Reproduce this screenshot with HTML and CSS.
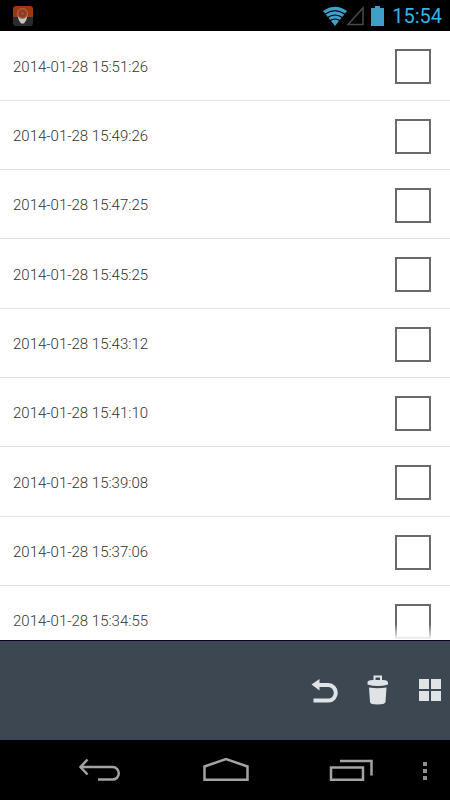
FILE: index.html
```
<!DOCTYPE html>
<html lang="en">
<head>
    <meta charset="UTF-8">
    <meta name="viewport" content="width=device-width, initial-scale=1.0">
    <title>Records</title>
    <link rel="stylesheet" href="styles.css">
</head>
<body>
    <header class="status-bar">
        <svg class="app-icon" width="20" height="20" viewBox="0 0 20 20">
            <defs>
                <clipPath id="appShape"><rect width="20" height="20" rx="3"/></clipPath>
            </defs>
            <g clip-path="url(#appShape)">
                <rect width="20" height="12" fill="#a03610"/>
                <rect y="11" width="20" height="9" fill="#2b2c2d"/>
            </g>
            <path d="M4.500 9.500q.5 4 3.500 8h3q3-4 3.500-8z" fill="#c9c5c2"/>
            <circle cx="9.500" cy="7.500" r="5" fill="#93452f" stroke="#b0654f"/>
            <circle cx="9.500" cy="7.500" r="2.500" fill="#a8452a" stroke="#7a3420"/>
        </svg>
        <div class="status-info">
            <svg width="62" height="20" viewBox="0 0 62 20">
                <!-- wifi -->
                <path d="M1 5Q13-3.500 25 5L13 20z" fill="#3f9fca"/>
                <g fill="none" stroke="#000" stroke-width="1.200">
                    <path d="M2.500 8.500Q13 1 23.500 8.500"/>
                    <path d="M5 12Q13 6 21 12"/>
                    <path d="M7.500 15Q13 11 18.500 15"/>
                </g>
                <!-- signal -->
                <path d="M41 2v16.500H26z" fill="none" stroke="#4a4a4a" stroke-width="1.500"/>
                <!-- battery -->
                <path d="M49 2h4V0h5v2h4v18H49z" fill="#3f9fca"/>
            </svg>
            <span class="clock">15:54</span>
        </div>
    </header>

    <main class="records">
        <ul class="record-list">
            <li class="record"><label for="r1">2014-01-28 15:51:26</label><input type="checkbox" id="r1"></li>
            <li class="record"><label for="r2">2014-01-28 15:49:26</label><input type="checkbox" id="r2"></li>
            <li class="record"><label for="r3">2014-01-28 15:47:25</label><input type="checkbox" id="r3"></li>
            <li class="record"><label for="r4">2014-01-28 15:45:25</label><input type="checkbox" id="r4"></li>
            <li class="record"><label for="r5">2014-01-28 15:43:12</label><input type="checkbox" id="r5"></li>
            <li class="record"><label for="r6">2014-01-28 15:41:10</label><input type="checkbox" id="r6"></li>
            <li class="record"><label for="r7">2014-01-28 15:39:08</label><input type="checkbox" id="r7"></li>
            <li class="record"><label for="r8">2014-01-28 15:37:06</label><input type="checkbox" id="r8"></li>
            <li class="record"><label for="r9">2014-01-28 15:34:55</label><input type="checkbox" id="r9"></li>
        </ul>
    </main>

    <div class="toolbar">
        <button type="button" class="tool-btn" aria-label="Undo">
            <svg width="28" height="28" viewBox="0 0 28 28">
                <path d="M8 8h10.500a7.300 7.800 0 0 1 0 15.600H3.500" fill="none" stroke="#dfe3e6" stroke-width="4"/>
                <path d="M1.500 7.500l8-5.500v11.500z" fill="#dfe3e6"/>
            </svg>
        </button>
        <button type="button" class="tool-btn" aria-label="Delete">
            <svg width="28" height="32" viewBox="0 0 28 32">
                <path d="M10.500 6V1.500h6.500V6" fill="none" stroke="#dfe3e6" stroke-width="2"/>
                <path d="M3.500 9.500V7.500q0-2.500 5-2.500h10.500q5 0 5 2.500v2q-10 3-20.500 0z" fill="#dfe3e6"/>
                <path d="M5 12.500q9 1.500 17.500 0L21.500 27q-.5 2.500-8 2.500t-7.500-2.500z" fill="#dfe3e6"/>
            </svg>
        </button>
        <button type="button" class="tool-btn" aria-label="Grid">
            <svg width="24" height="24" viewBox="0 0 24 24" fill="#dfe3e6">
                <rect x="1" y="0" width="10" height="10"/>
                <rect x="13" y="0" width="10" height="10"/>
                <rect x="1" y="12" width="10" height="10"/>
                <rect x="13" y="12" width="10" height="10"/>
            </svg>
        </button>
    </div>

    <nav class="system-nav">
        <button type="button" class="nav-btn" aria-label="Back">
            <svg width="46" height="28" viewBox="0 0 46 28" fill="none" stroke="#a3a3a3" stroke-width="2.500">
                <path d="M4 10h31.500a6.300 6.300 0 0 1 0 12.600H21"/>
                <path d="M10.500 2.500L3.500 10l7 7.500"/>
            </svg>
        </button>
        <button type="button" class="nav-btn" aria-label="Home">
            <svg width="46" height="28" viewBox="0 0 46 28" fill="none" stroke="#a3a3a3" stroke-width="2.500">
                <path d="M1.500 9.500L23 2l21.500 7.500v13.200h-43z"/>
            </svg>
        </button>
        <button type="button" class="nav-btn" aria-label="Recent apps">
            <svg width="46" height="28" viewBox="0 0 46 28" fill="none" stroke="#a3a3a3" stroke-width="2.500">
                <path d="M3 10.500h32v12.300H3z"/>
                <path d="M12 4h31.500v14.500"/>
            </svg>
        </button>
        <button type="button" class="menu-btn" aria-label="Menu">
            <svg width="6" height="20" viewBox="0 0 6 20" fill="#8f8f8f">
                <rect x="1" y="1" width="4" height="4"/>
                <rect x="1" y="8" width="4" height="4"/>
                <rect x="1" y="15" width="4" height="4"/>
            </svg>
        </button>
    </nav>
</body>
</html>
```
FILE: styles.css
```
* {
    margin: 0;
    padding: 0;
    box-sizing: border-box;
}

body {
    height: 100vh;
    display: flex;
    flex-direction: column;
    background-color: #fff;
    color: #333;
    font-family: Roboto, sans-serif;
    overflow: hidden;
}

svg {
    display: block;
}

button {
    background: none;
    border: none;
    cursor: pointer;
}

/* Status bar */
.status-bar {
    flex: none;
    height: 31px;
    padding: 0 8px 0 13px;
    display: flex;
    justify-content: space-between;
    align-items: center;
    background-color: #000;
}

.status-info {
    display: flex;
    align-items: center;
    gap: 8px;
}

.clock {
    font-size: 20px;
    line-height: 24px;
    color: #33b5e5;
}

/* Record list */
.records {
    position: relative;
    flex: 1;
    min-height: 0;
    overflow: hidden;
}

.records::after {
    content: "";
    position: absolute;
    left: 0;
    right: 0;
    bottom: 0;
    height: 16px;
    background: linear-gradient(rgba(255, 255, 255, 0), #fff);
}

.record-list {
    list-style: none;
}

.record {
    height: 69px;
    padding: 2px 19px 0 13px;
    display: flex;
    justify-content: space-between;
    align-items: center;
    border-bottom: 1px solid #e2e2e2;
}

.record:nth-child(3n+1) {
    height: 70px;
}

.record label {
    font-size: 15px;
    font-weight: 300;
    line-height: 20px;
}

.record input {
    appearance: none;
    width: 36px;
    height: 35px;
    border: 2px solid #6a6a6a;
    background-color: #fff;
}

.record input:checked {
    background-color: #6a6a6a;
}

/* Toolbar */
.toolbar {
    flex: none;
    height: 100px;
    padding-right: 8px;
    display: flex;
    justify-content: flex-end;
    align-items: center;
    gap: 26px;
    background-color: #3d4751;
    border-top: 1px solid #0a0020;
}

/* System navigation */
.system-nav {
    flex: none;
    height: 60px;
    padding: 2px 14px 0 37px;
    display: flex;
    align-items: center;
    background-color: #000;
}

.nav-btn {
    flex: 1;
    display: flex;
    justify-content: center;
}

.menu-btn {
    width: 22px;
    display: flex;
    justify-content: center;
}
```
